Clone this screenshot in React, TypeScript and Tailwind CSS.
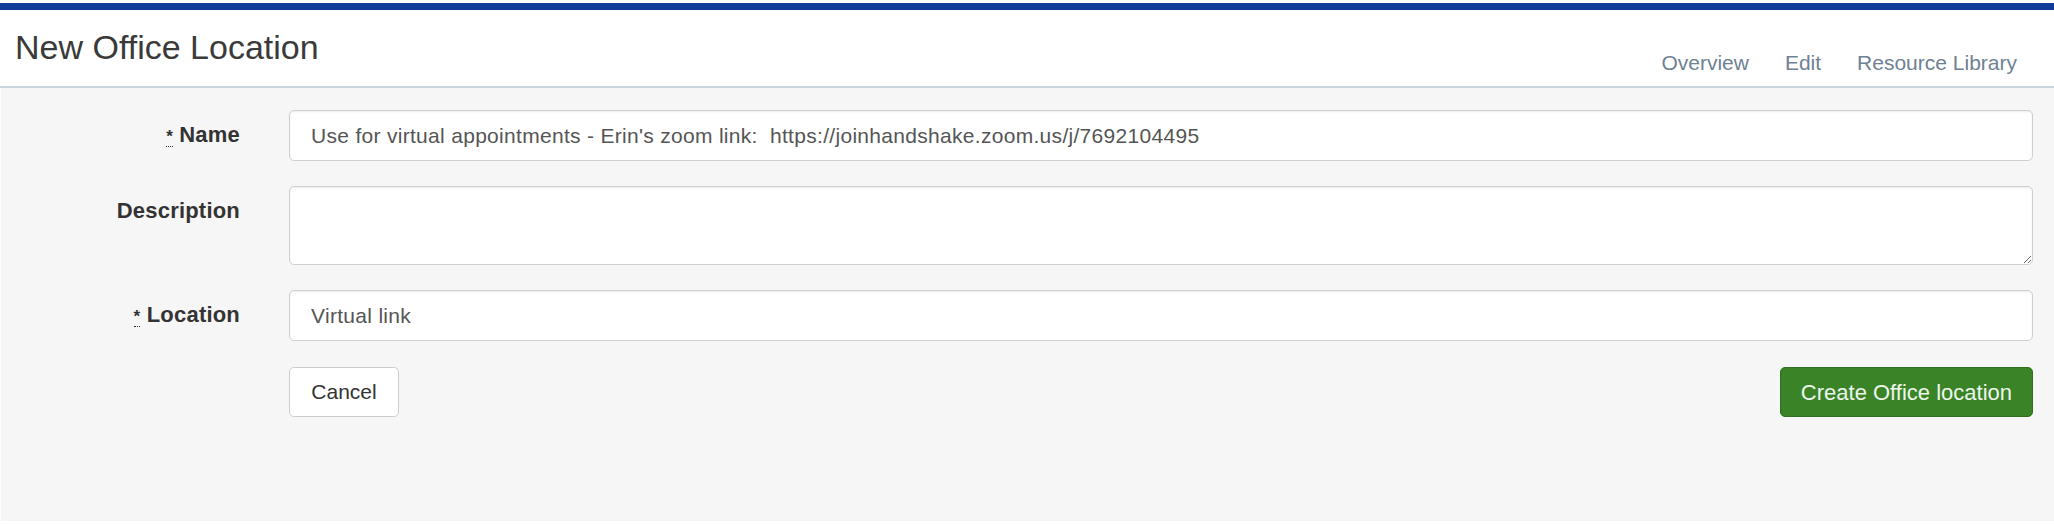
import React from 'react'

function Label({ text, required }: { text: string; required?: boolean }) {
  return (
    <div className="pt-[14px] text-right text-[22px] leading-[22px] font-bold text-[#333] tracking-[0.2px]">
      {required && (
        <>
          <abbr title="required" className="no-underline border-b border-dotted border-[#333] text-[17px]">*</abbr>{' '}
        </>
      )}
      {text}
    </div>
  )
}

const field =
  'w-full rounded-[5px] border border-[#cfcfcf] bg-white px-[21px] text-[21px] tracking-[0.3px] text-[#555] shadow-[inset_0_1px_2px_rgba(0,0,0,0.08)] outline-none'

export default function App() {
  const nav = ['Overview', 'Edit', 'Resource Library']

  return (
    <div className="w-[2054px] h-[524px] bg-white font-['Liberation_Sans',Arial,sans-serif] overflow-hidden">
      <div className="h-[3px] bg-white" />
      <div className="h-[7px] bg-[#0f3a99]" />

      <div className="h-[78px] flex items-start justify-between border-b-2 border-[#c9d3db] pl-[15px] pr-[37px]">
        <h1 className="mt-[20px] text-[34px] leading-[34px] text-[#3a3a3a]">New Office Location</h1>
        <nav className="mt-[42px] flex gap-[36px] text-[21px] leading-[21px] text-[#6f8193]">
          {nav.map((item) => (
            <a key={item} href="#" className="hover:underline">
              {item}
            </a>
          ))}
        </nav>
      </div>

      <div className="h-[433px] ml-px bg-[#f6f6f6] pt-[22px] pr-[21px]">
        <div className="grid grid-cols-[239px_1fr] gap-x-[49px]">
          <Label text="Name" required />
          <input
            defaultValue="Use for virtual appointments - Erin's zoom link:  https://joinhandshake.zoom.us/j/7692104495"
            className={`h-[51px] ${field}`}
          />

          <div className="h-[25px] col-span-2" />

          <Label text="Description" />
          <textarea className={`h-[79px] py-[12px] ${field}`} />

          <div className="h-[25px] col-span-2" />

          <Label text="Location" required />
          <input defaultValue="Virtual link" className={`h-[51px] ${field}`} />

          <div className="h-[26px] col-span-2" />

          <div />
          <div className="flex items-center justify-between">
            <button className="h-[50px] w-[110px] rounded-[5px] border border-[#cccccc] bg-white text-[21px] text-[#333]">
              Cancel
            </button>
            <button className="h-[50px] px-[20px] rounded-[5px] border border-[#2f6f20] bg-[#3a8427] text-[22px] text-[#eef5ec]">
              Create Office location
            </button>
          </div>
        </div>
      </div>
    </div>
  )
}
